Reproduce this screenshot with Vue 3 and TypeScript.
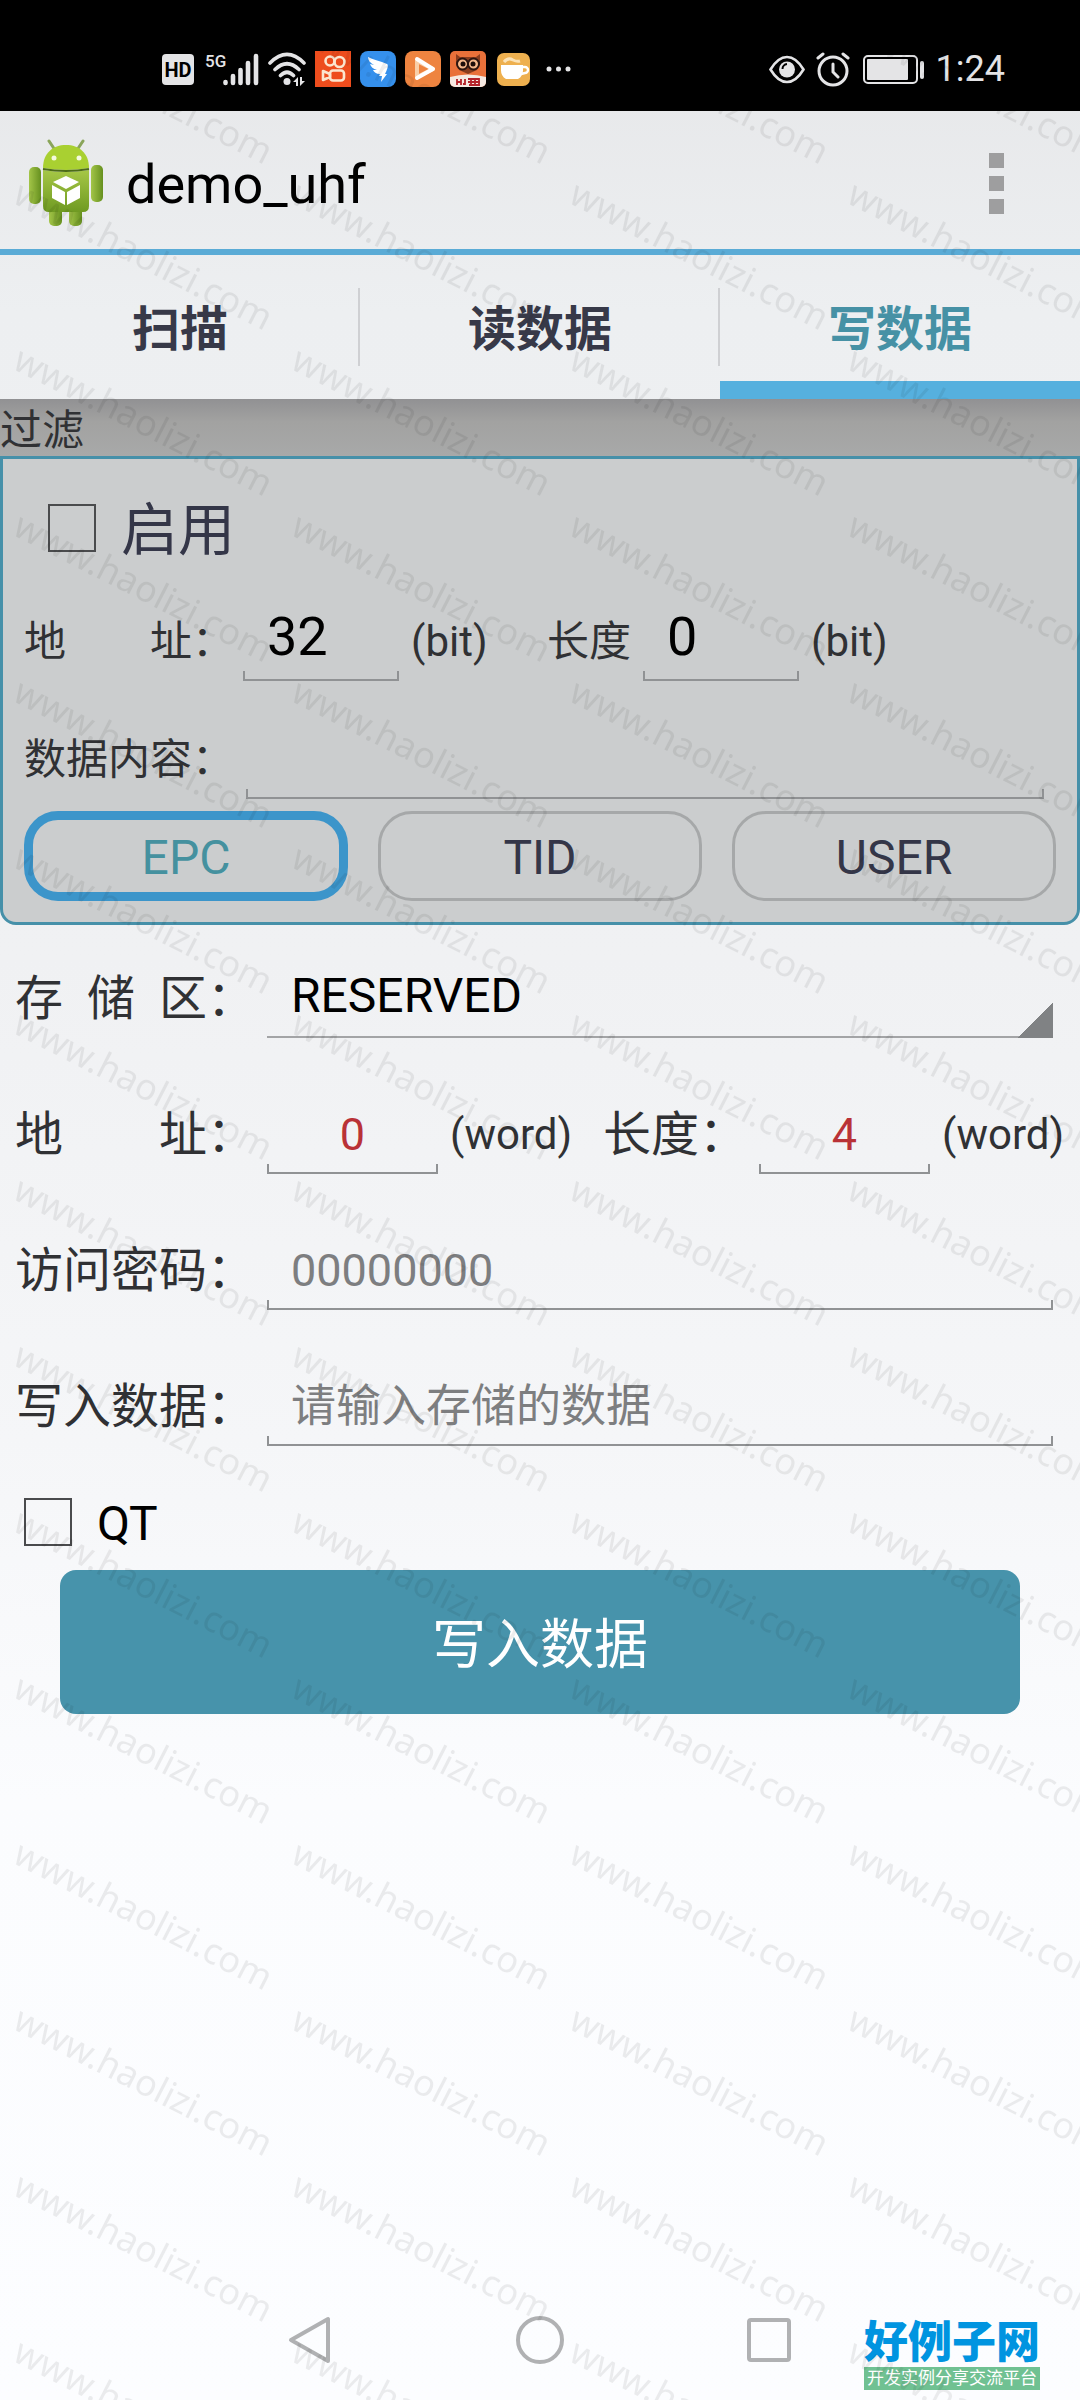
<script setup lang="ts">
import { ref } from 'vue'

const tabs = ['扫描', '读数据', '写数据']
const activeTab = ref('写数据')

const banks = ['EPC', 'TID', 'USER']
const activeBank = ref('EPC')

const filterOn = ref(false)
const filterAddress = ref('32')
const filterLength = ref('0')
const filterData = ref('')

const memoryBanks = ['RESERVED', 'EPC', 'TID', 'USER']
const memoryBank = ref('RESERVED')
const address = ref('0')
const length = ref('4')
const password = ref('')
const payload = ref('')
const qt = ref(false)
</script>

<template>
  <div class="screen">
    <header class="status">
      <div class="status-left">
        <svg width="32" height="36" viewBox="0 0 32 36">
          <rect x="0" y="3" width="32" height="31" rx="4" fill="#e4e4e6" />
          <text x="16" y="26" text-anchor="middle" font-family="Roboto, sans-serif" font-weight="700" font-size="20" fill="#000">HD</text>
        </svg>
        <svg width="56" height="36" viewBox="0 0 56 36">
          <text x="2" y="16" font-family="Roboto, sans-serif" font-weight="500" font-size="17" fill="#e4e4e6">5G</text>
          <g stroke="#e4e4e6" stroke-width="4.600" stroke-linecap="round">
            <path d="M22.500 31v1M30 25v7M37.500 19v13M45 12v20M53 5v27" />
          </g>
        </svg>
        <svg width="38" height="36" viewBox="0 0 38 36">
          <g fill="none" stroke="#e4e4e6" stroke-width="3.600" stroke-linecap="round">
            <path d="M2 12Q19-5 36 12M7 18.500Q19 7 31 18.500M12.500 24.500Q19 18 25.500 24.500" />
          </g>
          <circle cx="19" cy="30.500" r="3.500" fill="#e4e4e6" />
          <path d="M25 31l5-5v9h-2v-4zM37 30l-5 5v-9h2v4z" fill="#e4e4e6" />
        </svg>
        <svg width="36" height="36" viewBox="0 0 36 36">
          <rect width="36" height="36" fill="#ee4d1d" />
          <g fill="none" stroke="#fbe6cf" stroke-width="2.600">
            <circle cx="15" cy="10" r="4.500" />
            <circle cx="24.500" cy="11" r="5" />
            <rect x="15" y="19.500" width="14" height="10" rx="3" />
            <path d="M15 23l-7-3v9l7-3z" stroke-linejoin="round" />
          </g>
        </svg>
        <svg width="36" height="36" viewBox="0 0 36 36">
          <rect width="36" height="36" rx="8" fill="#3590ec" />
          <path d="M8 6c6 3 12 4 19 7 2 1 0 6-2 10h2l-6 8 1-6h-3l1-2c-4 0-6-2-7-4l4 0c-4-1-6-3-7-6l4 1c-4-2-6-5-6-8z" fill="#fff" />
        </svg>
        <svg width="36" height="36" viewBox="0 0 36 36">
          <rect width="36" height="36" rx="8" fill="#ee8440" />
          <path d="M12 10v16l16-8z" fill="none" stroke="#f9cfa8" stroke-width="4" stroke-linejoin="round" />
          <path d="M12 8l16 10-16 9" fill="none" stroke="#fff" stroke-width="4" stroke-linejoin="round" stroke-linecap="round" />
        </svg>
        <svg width="36" height="36" viewBox="0 0 36 36">
          <rect width="36" height="36" rx="5" fill="#e9713a" />
          <path d="M0 26q18-5 36 0v5a5 5 0 0 1-5 5H5a5 5 0 0 1-5-5z" fill="#f5e9e2" />
          <path d="M6 3l4 3h16l4-3v8l-3 8-9 4-9-4-3-8z" fill="#8a3d1e" />
          <g fill="#f4b98c" stroke="#2b1510" stroke-width="2">
            <circle cx="12.500" cy="13" r="5.500" />
            <circle cx="23.500" cy="13" r="5.500" />
          </g>
          <circle cx="13" cy="13" r="2.500" fill="#1d0e0a" />
          <circle cx="23" cy="13" r="2.500" fill="#1d0e0a" />
          <path d="M7 28v6M11 28v6M7 31h4M15 28v5h-2M18 28h11M18 31h12M19 34h11M21 27v7M25 27v7M29 27v7" stroke="#b4232a" stroke-width="1.800" fill="none" />
        </svg>
        <svg width="36" height="36" viewBox="0 0 36 36">
          <rect x="2" y="2" width="33" height="33" rx="7" fill="#eeb04f" />
          <path d="M6 14h22v5a10 10 0 0 1-5 9H11a10 10 0 0 1-5-9z" fill="#fff" />
          <path d="M27 16h3a3 3 0 0 1 0 6l-4 1" fill="none" stroke="#fff" stroke-width="2.400" />
          <path d="M9 11q4-5 9-2 4 2 7 1" fill="none" stroke="#fbe3b8" stroke-width="3" />
        </svg>
        <svg width="36" height="36" viewBox="0 0 36 36" fill="#e4e4e6">
          <circle cx="9" cy="18" r="2.500" />
          <circle cx="18.500" cy="18" r="2.500" />
          <circle cx="28" cy="18" r="2.500" />
        </svg>
      </div>
      <div class="status-right">
        <svg width="36" height="36" viewBox="0 0 36 36">
          <path d="M1.500 18.500Q9 6 18 6t16.500 12.500Q27 31 18 31T1.500 18.500z" fill="none" stroke="#e4e4e6" stroke-width="2.600" />
          <circle cx="18" cy="18.500" r="8" fill="#e4e4e6" />
          <path d="M13.500 18a5 5 0 0 1 4.500-5" fill="none" stroke="#000" stroke-width="2" />
        </svg>
        <svg width="34" height="36" viewBox="0 0 34 36">
          <g fill="none" stroke="#e4e4e6" stroke-width="3" stroke-linecap="round">
            <circle cx="17" cy="20" r="14" />
            <path d="M2 7l5-4M32 7l-5-4M17 13v8l5 5" />
          </g>
        </svg>
        <svg width="64" height="36" viewBox="-2 0 64 36">
          <rect x="1" y="5" width="53" height="27" rx="4" fill="none" stroke="#e4e4e6" stroke-width="2" />
          <rect x="4" y="8" width="41" height="21" rx="1" fill="#e4e4e6" />
          <rect x="57" y="10" width="4" height="18" rx="2" fill="#e4e4e6" />
        </svg>
        <time class="clock">1:24</time>
      </div>
    </header>

    <div class="appbar">
      <svg class="app-icon" width="76" height="88" viewBox="0 0 76 88">
        <defs>
          <linearGradient id="robot" x1="0" y1="0" x2="0" y2="1">
            <stop offset="0" stop-color="#a6c746" />
            <stop offset="1" stop-color="#6f9a22" />
          </linearGradient>
          <linearGradient id="limb" x1="0" y1="0" x2="1" y2="0">
            <stop offset="0" stop-color="#a3c548" />
            <stop offset="1" stop-color="#66901f" />
          </linearGradient>
        </defs>
        <path d="M21 2l6 9M55 2l-6 9" stroke="#8aa55a" stroke-width="3" stroke-linecap="round" />
        <path d="M15 29C15 14 25 6 38 6s23 8 23 23q-23 4-46 0z" fill="#a9d031" />
        <circle cx="26" cy="19" r="2.500" fill="#f4fadf" />
        <circle cx="51" cy="19" r="2.500" fill="#f4fadf" />
        <rect x="1" y="28" width="12" height="37" rx="5" fill="url(#limb)" />
        <rect x="63" y="26" width="12" height="37" rx="5" fill="url(#limb)" />
        <rect x="21" y="66" width="13" height="21" rx="5" fill="url(#limb)" />
        <rect x="41" y="66" width="13" height="21" rx="5" fill="url(#limb)" />
        <path d="M15 31q23 4 46 0v36q0 6-6 6H21q-6 0-6-6z" fill="url(#robot)" />
        <path d="M15 30q23 4 46 0" fill="none" stroke="#4c6c17" stroke-width="2" />
        <path d="M38 37l13 6-13 7-13-7z" fill="#fff" />
        <path d="M24 46l13 7v13l-13-7zM52 46l-13 7v13l13-7z" fill="#fff" />
      </svg>
      <h1>demo_uhf</h1>
      <button class="more" type="button" aria-label="more">
        <i></i><i></i><i></i>
      </button>
    </div>

    <nav class="tabs">
      <button
        v-for="tab in tabs"
        :key="tab"
        type="button"
        :class="['tab', { active: tab === activeTab }]"
        @click="activeTab = tab"
      >{{ tab }}</button>
    </nav>

    <div class="strip">过滤</div>

    <section class="panel">
      <label class="check big">
        <input v-model="filterOn" type="checkbox" />
        <span>启用</span>
      </label>
      <div class="line">
        <label class="name" for="f-addr"><span>地</span><span>址</span></label><span class="colon">：</span>
        <input id="f-addr" v-model="filterAddress" class="field short" type="text" />
        <span class="unit">(bit)</span>
        <label for="f-len">长度</label>
        <input id="f-len" v-model="filterLength" class="field short" type="text" />
        <span class="unit">(bit)</span>
      </div>
      <div class="line data">
        <label class="name" for="f-data">数据内容</label><span class="colon">：</span>
        <input id="f-data" v-model="filterData" class="field grow" type="text" />
      </div>
      <div class="banks">
        <button
          v-for="bank in banks"
          :key="bank"
          type="button"
          :class="['bank', { active: bank === activeBank }]"
          @click="activeBank = bank"
        >{{ bank }}</button>
      </div>
    </section>

    <form class="form" @submit.prevent>
      <div class="row">
        <label class="name" for="bank"><span>存</span><span>储</span><span>区</span></label><span class="colon">：</span>
        <select id="bank" v-model="memoryBank" class="spinner">
          <option v-for="b in memoryBanks" :key="b">{{ b }}</option>
        </select>
      </div>
      <div class="row tight">
        <label class="name" for="addr"><span>地</span><span>址</span></label><span class="colon">：</span>
        <input id="addr" v-model="address" class="field number" type="text" />
        <span class="unit word">(word)</span>
        <label for="len">长度：</label>
        <input id="len" v-model="length" class="field number" type="text" />
        <span class="unit">(word)</span>
      </div>
      <div class="row">
        <label class="name" for="pwd">访问密码</label><span class="colon">：</span>
        <input id="pwd" v-model="password" class="field grow" type="text" placeholder="00000000" />
      </div>
      <div class="row">
        <label class="name" for="payload">写入数据</label><span class="colon">：</span>
        <input id="payload" v-model="payload" class="field grow" type="text" placeholder="请输入存储的数据" />
      </div>
      <label class="check">
        <input v-model="qt" type="checkbox" />
        <span>QT</span>
      </label>
      <button class="submit" type="submit">写入数据</button>
    </form>

    <footer class="navbar">
      <button type="button" aria-label="back">
        <svg width="48" height="52" viewBox="0 0 48 52"><path d="M42 5v42L5 26z" /></svg>
      </button>
      <button type="button" aria-label="home">
        <svg width="48" height="52" viewBox="0 0 48 52"><circle cx="24" cy="26" r="22" /></svg>
      </button>
      <button type="button" aria-label="recents">
        <svg width="48" height="52" viewBox="0 0 48 52"><rect x="3" y="6" width="40" height="40" rx="2" /></svg>
      </button>
    </footer>

    <div class="site">
      <strong>好例子网</strong>
      <span>开发实例分享交流平台</span>
    </div>

    <svg class="watermark" width="100%" height="100%" aria-hidden="true">
      <defs>
        <pattern id="mark" x="0" y="12" width="278" height="166" patternUnits="userSpaceOnUse">
          <text x="11" y="24" transform="rotate(27 11 24)">www.haolizi.com</text>
        </pattern>
      </defs>
      <rect width="100%" height="100%" fill="url(#mark)" />
    </svg>
  </div>
</template>

<style>
body {
  margin: 0;
}
</style>

<style scoped>
.screen {
  position: relative;
  display: flex;
  flex-direction: column;
  min-height: 100vh;
  overflow: hidden;
  color: #303134;
  font-family: Roboto, "Noto Sans CJK SC", sans-serif;
  background: linear-gradient(#e5e6e8, #edeff1 13%, #f0f1f3 40%, #f5f6f8 60%, #fbfcfe 75%, #fcfdff);
}

button,
input,
select {
  box-sizing: border-box;
  margin: 0;
  padding: 0;
  border: 0;
  border-radius: 0;
  color: inherit;
  background: none;
  font: inherit;
  outline: none;
}

svg {
  display: block;
}

/* status bar */
.status {
  display: flex;
  justify-content: space-between;
  align-items: center;
  box-sizing: border-box;
  height: 111px;
  padding: 26px 75px 0 162px;
  background: #000;
}

.status-left,
.status-right {
  display: flex;
  align-items: center;
  gap: 9px;
}

.status-right {
  gap: 11px;
}

.clock {
  color: #e4e4e6;
  font-size: 36px;
  line-height: 36px;
}

/* title bar */
.appbar {
  display: flex;
  align-items: center;
  box-sizing: border-box;
  height: 144px;
  padding: 6px 60px 0 28px;
  border-bottom: 6px solid #5aabd6;
}

.app-icon {
  margin-right: 22px;
}

h1 {
  flex: 1;
  margin: 0;
  padding-top: 4px;
  color: #000;
  font-size: 54px;
  font-weight: 400;
  line-height: 64px;
}

.more {
  display: flex;
  flex-direction: column;
  align-items: center;
  gap: 8px;
  width: 48px;
}

.more i {
  width: 15px;
  height: 15px;
  background: #9e9e9f;
}

/* tabs */
.tabs {
  display: flex;
  height: 144px;
}

.tab {
  flex: 1;
  padding-bottom: 4px;
  color: #373948;
  font-size: 48px;
  font-weight: 700;
  background: linear-gradient(#cfd0d3, #cfd0d3) right center / 2px 78px no-repeat;
}

.tab.active {
  color: #4691a5;
  background: linear-gradient(#56b0de, #56b0de) bottom / 100% 18px no-repeat;
}

.strip {
  height: 57px;
  font-size: 42px;
  line-height: 64px;
  background: linear-gradient(#919193, #a2a2a1 40%, #a8a9a9);
}

/* filter panel */
.panel {
  display: flex;
  flex-direction: column;
  padding: 0 21px 21px;
  border: 3px solid #4690a9;
  border-radius: 0 0 16px 16px;
  background: #cbcdce;
  font-size: 42px;
  line-height: 54px;
}

.check {
  display: flex;
  align-items: center;
  gap: 25px;
  color: #000;
  font-size: 48px;
  line-height: 48px;
}

.check span {
  padding-top: 4px;
}

.check input {
  flex: none;
  width: 48px;
  height: 48px;
  border: 2px solid #4a4b4d;
  appearance: none;
}

.check input:checked {
  background: #4690a9;
}

.check.big {
  height: 138px;
  padding-left: 24px;
  color: #343648;
  font-size: 57px;
  line-height: 57px;
}

.form .check {
  height: 48px;
}

.line,
.row {
  display: flex;
  align-items: center;
  height: 84px;
}

.line label,
.row label,
.colon,
.unit {
  padding-top: 6px;
}

.line .name,
.row .name {
  display: flex;
  justify-content: space-between;
  width: 4em;
}

.line .colon {
  width: 39px;
}

.line.data {
  margin: 34px 12px 12px 0;
}

.line.data .colon {
  width: 54px;
}

.line .unit {
  width: 136px;
}

.unit {
  font-size: 42px;
}

.field {
  height: 100%;
  padding: 0 24px 6px;
  color: #000;
  font-size: 54px;
  background:
    linear-gradient(#909294, #909294) bottom / 100% 2px no-repeat,
    linear-gradient(#909294, #909294) left bottom / 2px 10px no-repeat,
    linear-gradient(#909294, #909294) right bottom / 2px 10px no-repeat;
}

.field.short {
  width: 156px;
  margin: 0 12px;
}

.field.grow {
  flex: 1;
  min-width: 0;
}

.banks {
  display: grid;
  grid-template-columns: repeat(3, minmax(0, 1fr));
  gap: 30px;
}

.bank {
  height: 90px;
  padding-top: 4px;
  border: 3px solid #a6a8a9;
  border-radius: 34px;
  color: #343648;
  font-size: 48px;
}

.bank.active {
  border: 9px solid #3c95ca;
  color: #45919f;
}

/* write form */
.form {
  display: flex;
  flex-direction: column;
  gap: 52px;
  padding: 29px 27px 0 15px;
  font-size: 48px;
  line-height: 60px;
}

.row .colon {
  width: 60px;
}

.row.tight {
  margin-right: -15px;
}

.row .field {
  padding: 4px 24px 0;
  font-size: 45px;
}

.row .field::placeholder {
  color: #7d7e80;
  opacity: 1;
}

.row .field.number {
  width: 171px;
  margin-right: 12px;
  color: #b93237;
  text-align: center;
}

.unit.word {
  width: 153px;
}

.row.tight .unit + label {
  width: 156px;
}

.spinner {
  flex: 1;
  height: 100%;
  padding: 0 24px;
  color: #000;
  appearance: none;
  background:
    linear-gradient(135deg, transparent 50%, #808284 50%) right bottom / 36px 36px no-repeat,
    linear-gradient(#a3a4a6, #a3a4a6) bottom / 100% 2px no-repeat;
}

.form .check {
  padding-left: 9px;
}

.submit {
  height: 144px;
  margin: -28px 33px 0 45px;
  padding-top: 8px;
  border-radius: 16px;
  color: #fff;
  font-size: 54px;
  background: #4793ab;
}

/* system navigation */
.navbar {
  display: flex;
  justify-content: center;
  align-items: center;
  gap: 182px;
  height: 120px;
  margin-top: auto;
}

.navbar path,
.navbar circle,
.navbar rect {
  fill: none;
  stroke: #b0b1b3;
  stroke-width: 4;
  stroke-linejoin: round;
}

.site {
  position: absolute;
  right: 40px;
  bottom: 10px;
  display: flex;
  flex-direction: column;
  gap: 4px;
  width: 176px;
  text-align: center;
}

.site strong {
  color: #0094e0;
  font-family: "Noto Sans CJK SC", sans-serif;
  font-size: 44px;
  font-weight: 900;
  line-height: 48px;
}

.site span {
  color: #fff;
  font-size: 17px;
  line-height: 23px;
  background: #70c192;
}

.watermark {
  position: absolute;
  inset: 0;
  pointer-events: none;
}

.watermark text {
  fill: #000;
  fill-opacity: 0.07;
  font-family: "Noto Sans", sans-serif;
  font-size: 36px;
}
</style>
